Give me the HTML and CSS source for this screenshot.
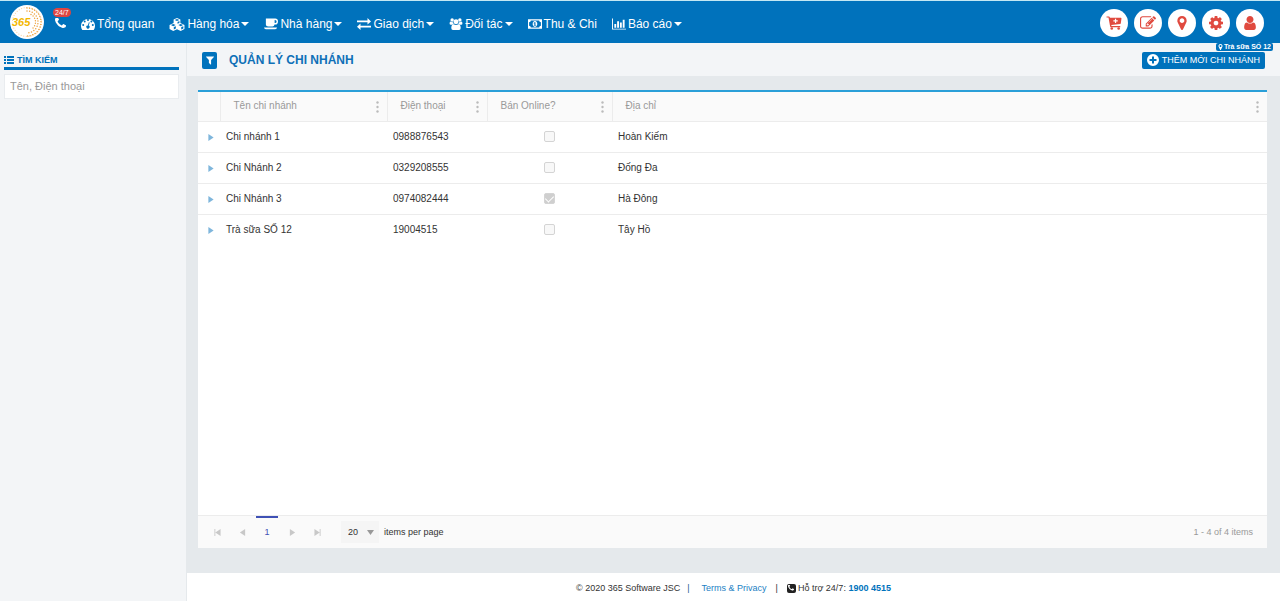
FILE: index.html
```
<!DOCTYPE html>
<html lang="vi">
<head>
<meta charset="utf-8">
<meta name="viewport" content="width=device-width, initial-scale=1">
<title>Quản lý chi nhánh</title>
<link rel="stylesheet" href="styles.css">
</head>
<body>
<svg class="sprite" aria-hidden="true">
  <symbol id="phone" viewBox="192 256 1408 1408"><path d="M1600 1240q0 27-10 70.500t-21 68.500q-21 50-122 106-94 51-186 51-27 0-53-3.500t-57.500-12.500-47-14.500-55.500-20.500-49-18q-98-35-175-83-127-79-264-216t-216-264q-48-77-83-175-3-9-18-49t-20.500-55.500-14.500-47-12.500-57.500-3.500-53q0-92 51-186 56-101 106-122 25-11 68.500-21t70.500-10q14 0 21 3 18 6 53 76 11 19 30 54t35 63.500 31 53.500q3 4 17.500 25t21.500 35.500 7 28.500q0 20-28.500 50t-62 55-62 53-28.500 46q0 9 5 22.500t8.500 20.500 14 24 11.500 19q76 137 174 235t235 174q2 1 19 11.500t24 14 20.500 8.500 22.500 5q18 0 46-28.500t53-62 55-62 50-28.500q14 0 28.500 7t35.500 21.500 25 17.500q25 15 53.500 31t63.500 35 54 30q70 35 76 53 3 7 3 21z"/></symbol>
  <symbol id="marker" viewBox="384 128 1024 1536"><path d="M1152 640q0-106-75-181t-181-75-181 75-75 181 75 181 181 75 181-75 75-181zm256 0q0 109-33 179l-364 774q-16 33-47.500 52t-67.500 19-67.500-19-46.500-52l-365-774q-33-70-33-179 0-212 150-362t362-150 362 150 150 362z"/></symbol>
  <symbol id="cog" viewBox="128 128 1536 1536"><path d="M1152 896q0-106-75-181t-181-75-181 75-75 181 75 181 181 75 181-75 75-181zm512-109v222q0 12-8 23t-20 13l-185 28q-19 54-39 91 35 50 107 138 10 12 10 25t-9 23q-27 37-99 108t-94 71q-12 0-26-9l-138-108q-44 23-91 38-16 136-29 186-7 28-36 28h-222q-14 0-24.500-8.500t-11.500-21.500l-28-184q-49-16-90-37l-141 107q-10 9-25 9-14 0-25-11-126-114-165-168-7-10-7-23 0-12 8-23 15-21 51-66.500t54-70.500q-27-50-41-99l-183-27q-13-2-21-12.500t-8-23.500v-222q0-12 8-23t19-13l186-28q14-46 39-92-40-57-107-138-10-12-10-24 0-10 9-23 26-36 98.500-107.500t94.500-71.500q13 0 26 10l138 107q44-23 91-38 16-136 29-186 7-28 36-28h222q14 0 24.500 8.500t11.500 21.500l28 184q49 16 90 37l142-107q9-9 24-9 13 0 25 10 129 119 165 170 7 8 7 22 0 12-8 23-15 21-51 66.500t-54 70.500q26 50 41 98l183 28q13 2 21 12.500t8 23.500z"/></symbol>
  <symbol id="user" viewBox="256 128 1280 1536"><path d="M1536 1399q0 109-62.500 187t-150.500 78h-854q-88 0-150.500-78t-62.500-187q0-85 8.500-160.500t31.500-152 58.500-131 94-89 134.500-34.500q131 128 313 128t313-128q76 0 134.500 34.500t94 89 58.500 131 31.500 152 8.500 160.500zm-256-887q0 159-112.500 271.500t-271.500 112.500-271.500-112.500-112.500-271.500 112.500-271.500 271.500-112.500 271.500 112.500 112.500 271.500z"/></symbol>
  <symbol id="filter" viewBox="192 256 1408 1408"><path d="M1595 295q17 41-14 70l-493 493v742q0 42-39 59-13 5-25 5-27 0-45-19l-256-256q-19-19-19-45v-486l-493-493q-31-29-14-70 17-39 59-39h1280q42 0 59 39z"/></symbol>
  <symbol id="edit" viewBox="0 128 1792 1536"><path d="M888 1184l116-116-152-152-116 116v56h96v96h56zm440-720q-16-16-33 1l-350 350q-17 17-1 33t33-1l350-350q17-17 1-33zm80 594v190q0 119-84.500 203.500t-203.500 84.500h-832q-119 0-203.500-84.500t-84.500-203.500v-832q0-119 84.500-203.500t203.500-84.500h832q63 0 117 25 15 7 18 23 3 17-9 29l-49 49q-14 14-32 8-23-6-45-6h-832q-66 0-113 47t-47 113v832q0 66 47 113t113 47h832q66 0 113-47t47-113v-126q0-13 9-22l64-64q15-15 35-7t20 29zm-96-738l288 288-672 672h-288v-288zm444 132l-92 92-288-288 92-92q28-28 68-28t68 28l152 152q28 28 28 68t-28 68z"/></symbol>
  <symbol id="cart" viewBox="0 0 16 15"><path fill-rule="evenodd" d="M0 .5h2.600q.6 0 .8.600l.2.900H15.400q.6 0 .6.700l-.7 5.200q-.1.600-.7.700L5.100 9.700l.2 1.100h8.900q.6 0 .6.600t-.6.600H4.500q-.5 0-.6-.5L2.100 1.700H0zM9 2.900v1.700H7.300v1.300H9v1.700h1.300V5.900H12V4.600h-1.700V2.900z"/><circle cx="5.600" cy="13.400" r="1.400"/><circle cx="13" cy="13.400" r="1.400"/></symbol>
  <symbol id="gauge" viewBox="0 0 14 12"><path fill-rule="evenodd" d="M1.300 12A7 7 0 1 1 12.700 12zM1.200 7a1 1 0 1 0 2 0a1 1 0 1 0-2 0zM2.700 3.500a1 1 0 1 0 2 0a1 1 0 1 0-2 0zM6 2a1 1 0 1 0 2 0a1 1 0 1 0-2 0zM9.400 3.500a1 1 0 1 0 2 0a1 1 0 1 0-2 0zM10.800 7a1 1 0 1 0 2 0a1 1 0 1 0-2 0zM7.900 4.200L6.800 7.400a1.600 1.600 0 1 0 .9.200l1-3.200z"/></symbol>
  <symbol id="cubes" viewBox="0 0 18 15"><path fill-rule="evenodd" d="M9 0l3.900 1.700v4.200l4.100 1.800 .6.500v4.600L13.300 15 9 12.900 4.700 15 .4 12.800V8.200l.6-.5 4.100-1.800V1.700zM9 1.200L6.300 2.300 9 3.400l2.700-1.100zM9.600 4.500v2.100l2.200-.9V3.500zM4.700 7L2 8.200l2.700 1.200 2.700-1.200zM5.300 10.500v2.700l2.400-1.200V9.500zM13.300 7l-2.700 1.200 2.700 1.200L16 8.200zM13.900 10.500v2.700l2.400-1.200V9.500z"/></symbol>
  <symbol id="cup" viewBox="0 0 15 12"><path fill-rule="evenodd" d="M2 0h10a3 3.300 0 0 1 0 6.600h-.7Q11 8.700 9 8.700H4.500Q2 8.700 2 6.500zM11.400 1.600V5h.4a1.700 1.700 0 0 0 0-3.400zM0 9.800h14q-.3 1.700-2 1.700H2q-1.700 0-2-1.700z"/></symbol>
  <symbol id="exchange" viewBox="0 0 14 12"><path d="M0 2.500h10.500V0L14 3.400 10.500 6.500V4.200H0zM14 9.500H3.500V12L0 8.700l3.500-3.100v2.200H14z"/></symbol>
  <symbol id="group" viewBox="0 0 15 14"><circle cx="3" cy="2.300" r="2"/><circle cx="12" cy="2.300" r="2"/><circle cx="7.500" cy="4.300" r="2.900"/><path d="M1.300 4.200q1.700 1.200 2.700.4Q4.200 6.200 5 7 3.500 7 2.700 8H1.500Q0 8 0 6.500 0 4.400 1.300 4.200zM13.700 4.200q-1.700 1.200-2.700.4-.2 1.600-1 2.400 1.500 0 2.300 1h1.200Q15 8 15 6.500q0-2.100-1.300-2.300zM4.800 7.200q2.700 1.700 5.400 0 2.800.2 2.800 4.500Q13 14 11 14H4q-2 0-2-2.300 0-4.300 2.800-4.500z"/></symbol>
  <symbol id="money" viewBox="0 0 15 10"><path fill-rule="evenodd" d="M0 0h15v10H0zM3 1.200Q3 3 1.200 3v4Q3 7 3 8.800h9Q12 7 13.800 7V3Q12 3 12 1.200zM7.500 1.900C10.800 1.900 10.800 8.100 7.500 8.100S4.200 1.900 7.500 1.900zM7 3l-1.100.9.500.5.400-.3v2.200h-.7V7h2.700v-.7h-.8V3z"/></symbol>
  <symbol id="chart" viewBox="0 0 15 12"><path d="M0 0h1v11h14v1H0zM2.500 6h2v4h-2zM5.500 3h2v7h-2zM8.500 4.500h2v5.500h-2zM11.500 1.500h2V10h-2z"/></symbol>
  <symbol id="list" viewBox="0 0 10 8"><path d="M0 0h2v2H0zM3 0h7v2H3zM0 3h2v2H0zM3 3h7v2H3zM0 6h2v2H0zM3 6h7v2H3z"/></symbol>
  <symbol id="plus" viewBox="0 0 12 12"><path fill-rule="evenodd" d="M6 0a6 6 0 1 1 0 12A6 6 0 1 1 6 0zM5 2.500V5H2.500v2H5v2.500h2V7h2.500V5H7V2.500z"/></symbol>
  <symbol id="caret" viewBox="0 0 8 4"><path d="M0 0h8L4 4z"/></symbol>
  <symbol id="drop" viewBox="0 0 7 5"><path d="M0 0h7L3.500 5z"/></symbol>
  <symbol id="right" viewBox="0 0 6 8"><path d="M0 0l6 4-6 4z"/></symbol>
  <symbol id="left" viewBox="0 0 6 8"><path d="M6 0L0 4l6 4z"/></symbol>
  <symbol id="first" viewBox="0 0 7 8"><path d="M0 0h1v8H0zM7 0v8L1 4z"/></symbol>
  <symbol id="last" viewBox="0 0 7 8"><path d="M6 0h1v8H6zM0 0l6 4-6 4z"/></symbol>
  <symbol id="dots" viewBox="0 0 3 12"><circle cx="1.500" cy="1.500" r="1.200"/><circle cx="1.500" cy="6" r="1.200"/><circle cx="1.500" cy="10.500" r="1.200"/></symbol>
</svg>

<header class="topbar">
  <a class="brand" href="#" aria-label="365">
    <svg class="logo" viewBox="0 0 34 34">
      <circle cx="17" cy="17" r="17" fill="#fff"/>
      <g fill="none" stroke="#eda03c" stroke-linecap="round">
        <circle cx="17" cy="17" r="14.500" stroke-width="1.200" stroke-dasharray="0 2.600" opacity=".5"/>
        <path d="M17 3a14 14 0 0 1 0 28" stroke-width="1.500" stroke-dasharray="0 2.700"/>
        <path d="M17 6a11 11 0 0 1 0 22" stroke-width="1.500" stroke-dasharray="0 2.700"/>
        <path d="M21 9.500a8.500 8.500 0 0 1 0 15" stroke-width="1.400" stroke-dasharray="0 2.600"/>
      </g>
      <text class="logo-text" x="2" y="21">365</text>
    </svg>
  </a>
  <a class="hotline" href="#" aria-label="Hotline 24/7">
    <svg class="icon i-phone"><use href="#phone"/></svg>
    <span class="badge">24/7</span>
  </a>
  <nav class="menu">
    <a href="#"><svg class="icon i-nav"><use href="#gauge"/></svg>Tổng quan</a>
    <a href="#"><svg class="icon i-cubes"><use href="#cubes"/></svg>Hàng hóa<svg class="icon i-caret"><use href="#caret"/></svg></a>
    <a href="#"><svg class="icon i-nav"><use href="#cup"/></svg>Nhà hàng<svg class="icon i-caret"><use href="#caret"/></svg></a>
    <a href="#"><svg class="icon i-nav"><use href="#exchange"/></svg>Giao dịch<svg class="icon i-caret"><use href="#caret"/></svg></a>
    <a href="#"><svg class="icon i-nav"><use href="#group"/></svg>Đối tác<svg class="icon i-caret"><use href="#caret"/></svg></a>
    <a href="#"><svg class="icon i-nav"><use href="#money"/></svg>Thu &amp; Chi</a>
    <a href="#"><svg class="icon i-nav"><use href="#chart"/></svg>Báo cáo<svg class="icon i-caret"><use href="#caret"/></svg></a>
  </nav>
  <div class="tools">
    <button class="round" aria-label="Giỏ hàng"><svg class="icon"><use href="#cart"/></svg></button>
    <button class="round" aria-label="Ghi chú"><svg class="icon"><use href="#edit"/></svg></button>
    <button class="round" aria-label="Chi nhánh"><svg class="icon"><use href="#marker"/></svg></button>
    <button class="round" aria-label="Cài đặt"><svg class="icon"><use href="#cog"/></svg></button>
    <button class="round" aria-label="Tài khoản"><svg class="icon"><use href="#user"/></svg></button>
    <span class="branch"><svg class="icon i-pin"><use href="#marker"/></svg>Trà sữa SỐ 12</span>
  </div>
</header>

<div class="body">
  <aside class="sidebar">
    <label class="side-title" for="search"><svg class="icon i-list"><use href="#list"/></svg>TÌM KIẾM</label>
    <input class="search" id="search" type="text" placeholder="Tên, Điện thoại">
  </aside>

  <div class="content">
    <div class="titlebar">
      <button class="filter" aria-label="Lọc"><svg class="icon i-filter"><use href="#filter"/></svg></button>
      <h1>QUẢN LÝ CHI NHÁNH</h1>
      <button class="add"><svg class="icon i-plus"><use href="#plus"/></svg>THÊM MỚI CHI NHÁNH</button>
    </div>

    <main class="card">
      <table class="grid">
        <colgroup><col class="c-toggle"><col class="c-name"><col class="c-phone"><col class="c-online"><col></colgroup>
        <thead>
          <tr>
            <th></th>
            <th><div class="head">Tên chi nhánh<svg class="icon i-dots"><use href="#dots"/></svg></div></th>
            <th><div class="head">Điện thoại<svg class="icon i-dots"><use href="#dots"/></svg></div></th>
            <th><div class="head">Bán Online?<svg class="icon i-dots"><use href="#dots"/></svg></div></th>
            <th><div class="head">Địa chỉ<svg class="icon i-dots"><use href="#dots"/></svg></div></th>
          </tr>
        </thead>
        <tbody>
          <tr><td><button class="expand" aria-label="Mở rộng"><svg class="icon"><use href="#right"/></svg></button></td><td>Chi nhánh 1</td><td>0988876543</td><td class="check"><input type="checkbox" disabled aria-label="Bán Online"></td><td>Hoàn Kiếm</td></tr>
          <tr><td><button class="expand" aria-label="Mở rộng"><svg class="icon"><use href="#right"/></svg></button></td><td>Chi Nhánh 2</td><td>0329208555</td><td class="check"><input type="checkbox" disabled aria-label="Bán Online"></td><td>Đống Đa</td></tr>
          <tr><td><button class="expand" aria-label="Mở rộng"><svg class="icon"><use href="#right"/></svg></button></td><td>Chi Nhánh 3</td><td>0974082444</td><td class="check"><input type="checkbox" checked disabled aria-label="Bán Online"></td><td>Hà Đông</td></tr>
          <tr><td><button class="expand" aria-label="Mở rộng"><svg class="icon"><use href="#right"/></svg></button></td><td>Trà sữa SỐ 12</td><td>19004515</td><td class="check"><input type="checkbox" disabled aria-label="Bán Online"></td><td>Tây Hồ</td></tr>
        </tbody>
      </table>
      <div class="pager">
        <button class="page" aria-label="Trang đầu"><svg class="icon"><use href="#first"/></svg></button>
        <button class="page" aria-label="Trang trước"><svg class="icon"><use href="#left"/></svg></button>
        <button class="page current">1</button>
        <button class="page" aria-label="Trang sau"><svg class="icon"><use href="#right"/></svg></button>
        <button class="page" aria-label="Trang cuối"><svg class="icon"><use href="#last"/></svg></button>
        <span class="size-box"><select class="size" id="size"><option>20</option></select><svg class="icon i-drop"><use href="#drop"/></svg></span>
        <label for="size">items per page</label>
        <span class="count">1 - 4 of 4 items</span>
      </div>
    </main>

    <footer class="footer">
      <span>© 2020 365 Software JSC</span>
      <span class="bar first-bar">|</span>
      <a href="#">Terms &amp; Privacy</a>
      <span class="bar">|</span>
      <span class="support"><span class="phone-box"><svg class="icon"><use href="#phone"/></svg></span>Hỗ trợ 24/7: <a class="tel" href="tel:19004515">1900 4515</a></span>
    </footer>
  </div>
</div>
</body>
</html>
```
FILE: styles.css
```
* { box-sizing: border-box; }
body {
  margin: 0;
  min-height: 100vh;
  display: flex;
  flex-direction: column;
  font-family: "Liberation Sans", Arial, sans-serif;
  font-size: 10px;
  color: #333;
  background: #e5e9ec;
}
button, input, select { font: inherit; color: inherit; border: 0; margin: 0; padding: 0; background: none; }
a { color: #1c7fc4; text-decoration: none; }
.sprite { display: none; }
.icon { fill: currentColor; display: block; flex: none; }

.topbar {
  display: flex;
  align-items: center;
  height: 43px;
  padding: 2px 16px 0 10px;
  background: #0072bc;
  border-top: 1px solid #c4e8f4;
  color: #fff;
}
.brand { padding-bottom: 2px; }
.logo { display: block; width: 34px; height: 34px; }
.logo-text { font: italic bold 11px "Liberation Sans", Arial, sans-serif; fill: #f3b800; }
.hotline { position: relative; width: 37px; padding-left: 11px; color: #fff; }
.i-phone { width: 11px; height: 11px; }
.badge {
  position: absolute;
  top: -10px;
  left: 9px;
  padding: 0 2px;
  border-radius: 5px;
  background: #e04540;
  font-size: 7px;
  line-height: 9px;
}
.menu { display: flex; gap: 15px; padding-top: 2px; font-size: 12px; }
.menu a { display: flex; align-items: center; gap: 2px; color: #fff; line-height: 20px; white-space: nowrap; }
.i-nav { width: 14px; height: 12px; }
.i-cubes { width: 16px; height: 13px; }
.i-caret { width: 8px; height: 4px; }
.tools { position: relative; display: flex; gap: 6px; margin-left: auto; }
.round {
  display: grid;
  place-items: center;
  width: 28px;
  height: 28px;
  border-radius: 50%;
  background: #fff;
  color: #e04a3f;
}
.round .icon { width: 16px; height: 14px; }
.branch {
  position: absolute;
  right: -9px;
  top: 34px;
  display: flex;
  align-items: center;
  gap: 1px;
  padding: 0 2px;
  border-radius: 2px;
  background: #0072bc;
  font-size: 7px;
  font-weight: bold;
  line-height: 8px;
  white-space: nowrap;
}
.i-pin { width: 5px; height: 6px; }

.body { flex: 1; display: flex; }
.sidebar { width: 187px; flex: none; padding: 9px 7px 0 4px; background: #f3f5f7; border-right: 1px solid #e5e9ec; }
.side-title {
  display: flex;
  align-items: center;
  gap: 3px;
  height: 18px;
  border-bottom: 3px solid #0072bc;
  color: #0072bc;
  font-size: 9px;
  font-weight: bold;
}
.i-list { width: 10px; height: 8px; }
.search { display: block; width: 100%; height: 25px; margin-top: 4px; padding: 0 5px 1px; border: 1px solid #e9ecef; background: #fff; font-size: 11px; }
.search::placeholder { color: #999; opacity: 1; }

.content { flex: 1; min-width: 0; display: flex; flex-direction: column; }
.titlebar { display: flex; align-items: center; height: 33px; padding: 1px 15px 0; background: #f3f5f7; }
.titlebar h1 { margin: 0 0 0 12px; font-size: 12px; color: #0f70b7; }
.filter { display: grid; place-items: center; width: 15px; height: 17px; border-radius: 2px; background: #0072bc; color: #fff; }
.i-filter { width: 8px; height: 9px; }
.add {
  display: flex;
  align-items: center;
  gap: 3px;
  height: 17px;
  margin-left: auto;
  padding: 0 5px;
  border-radius: 2px;
  background: #0072bc;
  color: #fff;
  font-size: 9px;
}
.i-plus { width: 12px; height: 12px; }

.card { flex: 1; display: flex; flex-direction: column; margin: 14px 13px 25px 11px; background: #fff; border-top: 2px solid #2a9fd8; }
.grid { width: 100%; border-collapse: collapse; table-layout: fixed; }
.c-toggle { width: 22px; }
.c-name { width: 167px; }
.c-phone { width: 100px; }
.c-online { width: 125px; }
.grid th { height: 29px; padding: 0; background: #fafafa; border-bottom: 1px solid #ececec; color: #999; font-weight: normal; text-align: left; }
.grid th + th { border-left: 1px solid #ececec; }
.head { display: flex; align-items: center; justify-content: space-between; padding: 0 8px 2px 13px; }
.i-dots { width: 3px; height: 12px; margin-top: 4px; color: #bbb; }
.grid td { height: 31px; padding: 0 6px; line-height: 16px; }
.grid tr + tr td { border-top: 1px solid #ececec; }
.expand { display: block; margin: 1px 0 0 4px; color: #7fb6dc; }
.expand .icon { width: 6px; height: 7px; }
.check { text-align: center; }
.check input {
  appearance: none;
  display: block;
  width: 11px;
  height: 11px;
  margin: 0 auto;
  border: 1px solid #d4d4d4;
  border-radius: 2px;
  background: #f8f8f8;
}
.check input:checked { display: grid; place-items: center; background: #cfcfcf; }
.check input:checked::before {
  content: "";
  width: 4px;
  height: 7px;
  margin-bottom: 2px;
  border: solid #fff;
  border-width: 0 1px 1px 0;
  transform: rotate(45deg);
}

.pager { display: flex; align-items: center; height: 33px; margin-top: auto; padding: 0 14px 0 8px; background: #fafafa; border-top: 1px solid #ececec; font-size: 9px; }
.page { display: grid; place-items: center; align-self: stretch; width: 22px; margin-right: 3px; color: #c8c8c8; }
.page .icon { width: 7px; height: 7px; }
.current { border-top: 2px solid #3f51b5; border-bottom: 2px solid transparent; color: #3f51b5; }
.size-box { position: relative; margin: 0 5px 0 10px; }
.size { appearance: none; display: block; width: 38px; height: 22px; padding-left: 7px; background: #f5f5f5; }
.i-drop { position: absolute; right: 5px; top: 9px; width: 7px; height: 5px; color: #999; }
.count { margin-left: auto; color: #999; }

.footer { display: flex; align-items: center; justify-content: center; height: 28px; padding-top: 2px; background: #fff; font-size: 9px; white-space: pre; }
.bar { margin: 0 9px; }
.first-bar { margin: 0 12px 0 7px; color: #1b5d8c; }
.support { display: flex; align-items: center; }
.phone-box { display: grid; place-items: center; width: 9px; height: 9px; margin-right: 2px; border-radius: 2px; background: #222; color: #fff; }
.phone-box .icon { width: 6px; height: 6px; }
.tel { font-weight: bold; color: #0072bc; }
```
